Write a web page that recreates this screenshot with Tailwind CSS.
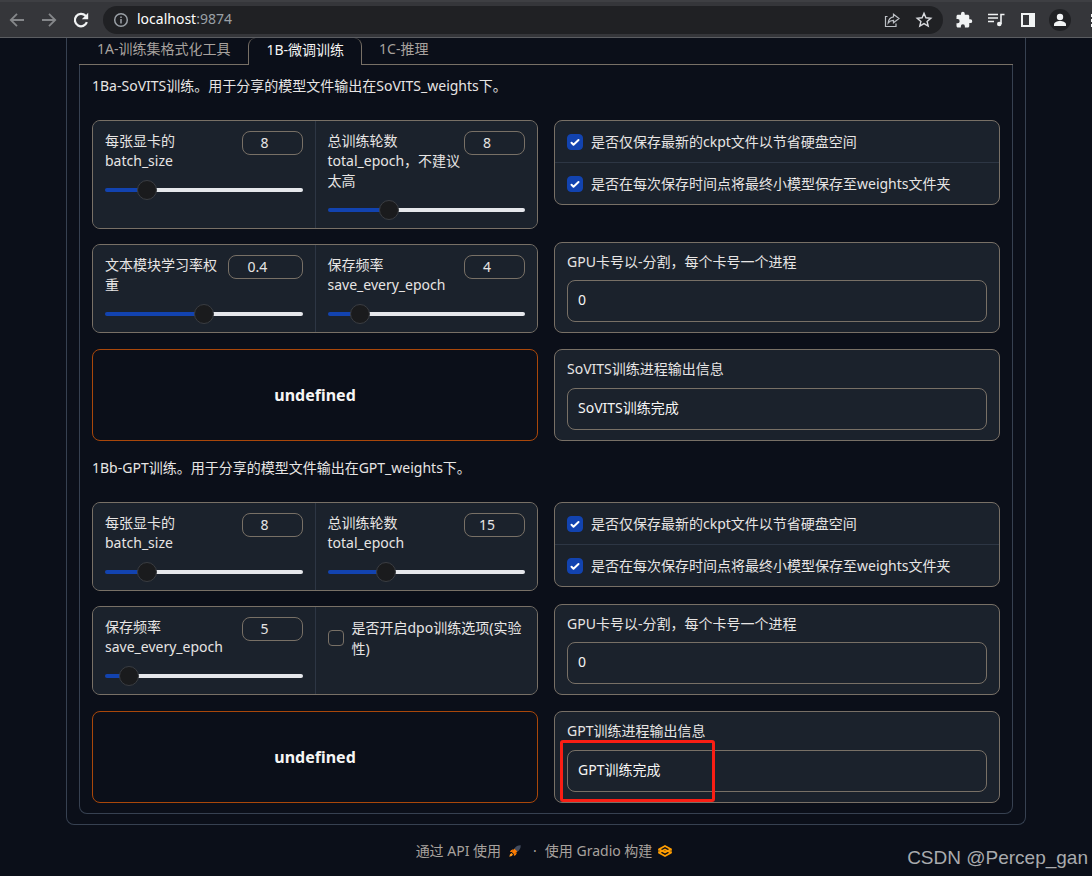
<!DOCTYPE html>
<html lang="zh-CN">
<head>
<meta charset="utf-8">
<meta name="viewport" content="width=device-width, initial-scale=1">
<title>GPT-SoVITS WebUI</title>
<script src="https://cdn.jsdelivr.net/npm/@tailwindcss/browser@4"></script>
</head>
<body class="relative min-h-screen overflow-x-hidden bg-[#0b0f19] text-sm text-[#e7e5e4] font-['Noto_Sans','Noto_Sans_CJK_SC',sans-serif] [color-scheme:dark]">

<header class="flex h-[38px] items-center overflow-hidden border-t-2 border-b border-t-[#3e3f43] border-b-[#5b5d61] bg-[#35363a] pl-2 text-[#e8eaed]">
  <div class="flex shrink-0 items-center gap-3.5">
    <button type="button" aria-label="后退" class="text-[#85878a]"><svg class="size-[18px]" viewBox="0 0 18 18" fill="none" stroke="currentColor" stroke-width="1.8"><path d="M16 9H3M9 2.8 2.8 9 9 15.2"/></svg></button>
    <button type="button" aria-label="前进" class="text-[#85878a]"><svg class="size-[18px]" viewBox="0 0 18 18" fill="none" stroke="currentColor" stroke-width="1.8"><path d="M2 9h13M9 2.8 15.2 9 9 15.2"/></svg></button>
    <button type="button" aria-label="重新加载" class="text-[#f1f3f4]"><svg class="size-[18px]" viewBox="0 0 18 18" fill="none" stroke="currentColor" stroke-width="2.2"><path d="M14.9 11.2A6.2 6.2 0 1 1 13.6 4.8L15 6.2"/><path d="M16.2 1.8v6.4H9.8z" fill="currentColor" stroke="none"/></svg></button>
  </div>
  <div class="ml-[13px] flex h-7 min-w-0 flex-1 items-center rounded-full bg-[#202124] pr-2.5 pl-2.5">
    <svg class="size-4 shrink-0 text-[#9aa0a6]" viewBox="0 0 16 16" fill="none" stroke="currentColor" stroke-width="1.5"><circle cx="8" cy="8" r="6.3"/><path d="M8 7v4.4M8 4.4V6"/></svg>
    <span class="ml-2 flex-1 pb-0.5 text-white">localhost<span class="text-[#9aa0a6]">:9874</span></span>
    <button type="button" aria-label="分享" class="text-[#bdc1c6]"><svg class="size-[18px]" viewBox="0 0 18 18" fill="none" stroke="currentColor" stroke-width="1.2"><path d="M4.5 5.5h-2v10h10.5v-3"/><path d="M10.5 3.2 16 7.5l-5.5 4.3V9.3c-2.5 0-4 .7-5.3 2.5.3-3.2 2-5.5 5.3-6z"/></svg></button>
    <button type="button" aria-label="收藏" class="ml-3.5 text-[#dadce0]"><svg class="size-[18px]" viewBox="0 0 18 18" fill="none" stroke="currentColor" stroke-width="1.4"><path d="m9 2.3 1.9 4.5 4.9.4-3.7 3.2 1.1 4.7L9 12.6l-4.2 2.5 1.1-4.7-3.7-3.2 4.9-.4z"/></svg></button>
  </div>
  <div class="ml-3 flex shrink-0 items-center text-[#f1f3f4]">
    <button type="button" aria-label="扩展程序"><svg class="size-[18px]" viewBox="0 0 24 24" fill="currentColor"><path d="M20.5 11H19V7c0-1.1-.9-2-2-2h-4V3.5a2.5 2.5 0 0 0-5 0V5H4c-1.1 0-2 .9-2 2v3.8h1.5a2.7 2.7 0 0 1 0 5.4H2V20c0 1.1.9 2 2 2h3.8v-1.5a2.7 2.7 0 0 1 5.4 0V22H17c1.1 0 2-.9 2-2v-4h1.5a2.5 2.5 0 0 0 0-5z"/></svg></button>
    <button type="button" aria-label="媒体控制" class="ml-3.5"><svg class="size-[18px]" viewBox="0 0 18 18" fill="none" stroke="currentColor" stroke-width="1.6"><path d="M1 3.5h10M1 7h10M1 10.5h6M17.5 3.5H14V13"/><circle cx="12.3" cy="13" r="2.3" fill="currentColor" stroke="none"/></svg></button>
    <button type="button" aria-label="侧边栏" class="ml-3.5"><svg class="size-[18px]" viewBox="0 0 18 18"><path fill="currentColor" fill-rule="evenodd" d="M2 2h14v14H2zM4 4v10h6V4z"/></svg></button>
    <button type="button" aria-label="个人资料" class="ml-3 rounded-full bg-[#202124]"><svg class="size-[22px]" viewBox="0 0 22 22" fill="currentColor"><circle cx="11" cy="8" r="3.2"/><path d="M5 17v-1.5c0-2.2 3-3.5 6-3.5s6 1.3 6 3.5V17z"/></svg></button>
    <button type="button" aria-label="菜单" class="ml-5 w-px overflow-hidden"><svg class="h-4 w-1" viewBox="0 0 4 16" fill="currentColor"><path d="M0 2h3v3H0zM0 7h3v3H0zM0 12h3v3H0z"/></svg></button>
  </div>
</header>

<main class="px-[66px]">
  <div class="rounded-b-lg border border-t-0 border-[#374151] px-3 pb-[10px]">
    <div role="tablist" class="flex h-[27px] text-[#a8a29e]">
      <button type="button" role="tab" aria-selected="false" class="border-b border-[#787066] pr-[18px] pb-1 pl-[18px]">1A-训练集格式化工具</button>
      <button type="button" role="tab" aria-selected="true" class="rounded-t-lg border-x border-[#787066] px-[17px] pb-1 text-[#f5f5f4]">1B-微调训练</button>
      <button type="button" role="tab" aria-selected="false" class="border-b border-[#787066] px-[17px] pb-1">1C-推理</button>
      <span class="flex-1 border-b border-[#787066]"></span>
    </div>

    <div role="tabpanel" class="flex flex-col gap-4 rounded-b-lg border border-t-0 border-[#374151] px-3 pt-[10px] pb-[10px]">
      <p class="h-[29px] leading-[21px]">1Ba-SoVITS训练。用于分享的模型文件输出在SoVITS_weights下。</p>

      <section class="grid grid-cols-2 gap-4">
        <div class="flex flex-col gap-[15px]">
          <div class="grid grid-cols-2 gap-px overflow-hidden rounded-lg border border-[#787066] bg-[#2d3644]">
            <div class="bg-[#1b222c] px-3 pt-[10px] pb-2">
              <div class="flex items-start justify-between">
                <label for="s-batch" class="min-w-0 leading-5">每张显卡的 batch_size</label>
                <input id="s-batch" type="number" value="8" class="h-6 w-[61px] shrink-0 rounded-lg border border-[#787066] bg-transparent px-2 pb-0.5 text-center">
              </div>
              <input type="range" aria-label="batch_size" min="1" max="40" value="8" style="--fill:20%" class="mt-[9px] block h-5 w-full appearance-none bg-transparent [&::-webkit-slider-runnable-track]:h-1 [&::-webkit-slider-runnable-track]:rounded-full [&::-webkit-slider-runnable-track]:bg-[linear-gradient(to_right,#1243b0_var(--fill),#e5e7eb_var(--fill))] [&::-webkit-slider-thumb]:-mt-2 [&::-webkit-slider-thumb]:size-5 [&::-webkit-slider-thumb]:appearance-none [&::-webkit-slider-thumb]:rounded-full [&::-webkit-slider-thumb]:border [&::-webkit-slider-thumb]:border-[#3a3d42] [&::-webkit-slider-thumb]:bg-[#1a1b1d]">
            </div>
            <div class="bg-[#1b222c] px-3 pt-[10px] pb-2">
              <div class="flex items-start justify-between">
                <label for="s-epoch" class="min-w-0 leading-5">总训练轮数total_epoch，不建议太高</label>
                <input id="s-epoch" type="number" value="8" class="h-6 w-[61px] shrink-0 rounded-lg border border-[#787066] bg-transparent px-2 pb-0.5 text-center">
              </div>
              <input type="range" aria-label="total_epoch" min="1" max="25" value="8" style="--fill:30%" class="mt-[9px] block h-5 w-full appearance-none bg-transparent [&::-webkit-slider-runnable-track]:h-1 [&::-webkit-slider-runnable-track]:rounded-full [&::-webkit-slider-runnable-track]:bg-[linear-gradient(to_right,#1243b0_var(--fill),#e5e7eb_var(--fill))] [&::-webkit-slider-thumb]:-mt-2 [&::-webkit-slider-thumb]:size-5 [&::-webkit-slider-thumb]:appearance-none [&::-webkit-slider-thumb]:rounded-full [&::-webkit-slider-thumb]:border [&::-webkit-slider-thumb]:border-[#3a3d42] [&::-webkit-slider-thumb]:bg-[#1a1b1d]">
            </div>
          </div>
          <div class="grid grid-cols-2 gap-px overflow-hidden rounded-lg border border-[#787066] bg-[#2d3644]">
            <div class="bg-[#1b222c] px-3 pt-[10px] pb-2">
              <div class="flex items-start justify-between">
                <label for="s-lr" class="min-w-0 leading-5">文本模块学习率权重</label>
                <input id="s-lr" type="number" value="0.4" step="0.05" class="h-6 w-[75px] shrink-0 rounded-lg border border-[#787066] bg-transparent px-2 pb-0.5 text-center">
              </div>
              <input type="range" aria-label="文本模块学习率权重" min="0.2" max="0.6" step="0.05" value="0.4" style="--fill:50%" class="mt-[9px] block h-5 w-full appearance-none bg-transparent [&::-webkit-slider-runnable-track]:h-1 [&::-webkit-slider-runnable-track]:rounded-full [&::-webkit-slider-runnable-track]:bg-[linear-gradient(to_right,#1243b0_var(--fill),#e5e7eb_var(--fill))] [&::-webkit-slider-thumb]:-mt-2 [&::-webkit-slider-thumb]:size-5 [&::-webkit-slider-thumb]:appearance-none [&::-webkit-slider-thumb]:rounded-full [&::-webkit-slider-thumb]:border [&::-webkit-slider-thumb]:border-[#3a3d42] [&::-webkit-slider-thumb]:bg-[#1a1b1d]">
            </div>
            <div class="bg-[#1b222c] px-3 pt-[10px] pb-2">
              <div class="flex items-start justify-between">
                <label for="s-save" class="min-w-0 leading-5">保存频率 save_every_epoch</label>
                <input id="s-save" type="number" value="4" class="h-6 w-[61px] shrink-0 rounded-lg border border-[#787066] bg-transparent px-2 pb-0.5 text-center">
              </div>
              <input type="range" aria-label="save_every_epoch" min="1" max="25" value="4" style="--fill:14%" class="mt-[9px] block h-5 w-full appearance-none bg-transparent [&::-webkit-slider-runnable-track]:h-1 [&::-webkit-slider-runnable-track]:rounded-full [&::-webkit-slider-runnable-track]:bg-[linear-gradient(to_right,#1243b0_var(--fill),#e5e7eb_var(--fill))] [&::-webkit-slider-thumb]:-mt-2 [&::-webkit-slider-thumb]:size-5 [&::-webkit-slider-thumb]:appearance-none [&::-webkit-slider-thumb]:rounded-full [&::-webkit-slider-thumb]:border [&::-webkit-slider-thumb]:border-[#3a3d42] [&::-webkit-slider-thumb]:bg-[#1a1b1d]">
            </div>
          </div>
        </div>
        <div class="flex flex-col justify-between">
          <div class="divide-y divide-[#2d3644] rounded-lg border border-[#787066] bg-[#1b222c] leading-[21px]">
            <label class="flex items-center gap-2 px-3 py-[10px]">
              <span class="grid size-4 shrink-0"><input type="checkbox" checked class="col-start-1 row-start-1 size-4 appearance-none rounded-sm border border-[#787066] checked:border-[#1243b0] checked:bg-[#1243b0]"><svg class="pointer-events-none col-start-1 row-start-1 size-4" viewBox="0 0 16 16" fill="none" stroke="#fff" stroke-width="2" stroke-linecap="round" stroke-linejoin="round"><path d="m4.5 8.7 2 2 5-4.7"/></svg></span>
              是否仅保存最新的ckpt文件以节省硬盘空间
            </label>
            <label class="flex items-center gap-2 px-3 py-[10px]">
              <span class="grid size-4 shrink-0"><input type="checkbox" checked class="col-start-1 row-start-1 size-4 appearance-none rounded-sm border border-[#787066] checked:border-[#1243b0] checked:bg-[#1243b0]"><svg class="pointer-events-none col-start-1 row-start-1 size-4" viewBox="0 0 16 16" fill="none" stroke="#fff" stroke-width="2" stroke-linecap="round" stroke-linejoin="round"><path d="m4.5 8.7 2 2 5-4.7"/></svg></span>
              是否在每次保存时间点将最终小模型保存至weights文件夹
            </label>
          </div>
          <div class="rounded-lg border border-[#787066] bg-[#1b222c] px-3 pt-[9px] pb-[10px]">
            <label for="s-gpu" class="block leading-5">GPU卡号以-分割，每个卡号一个进程</label>
            <input id="s-gpu" type="text" value="0" class="mt-2 block h-[42px] w-full rounded-lg border border-[#787066] bg-transparent px-[10px] pb-1 text-[#f5f5f4]">
          </div>
        </div>
      </section>

      <section class="grid grid-cols-2 gap-4">
        <button type="button" class="h-[92px] rounded-lg border border-[#a9470a] text-base font-bold text-[#f5f5f4]">undefined</button>
        <div class="flex flex-col justify-between rounded-lg border border-[#787066] bg-[#1b222c] px-3 pt-[9px] pb-[10px]">
          <label for="s-out" class="block leading-5">SoVITS训练进程输出信息</label>
          <input id="s-out" type="text" readonly value="SoVITS训练完成" class="block h-[42px] w-full rounded-lg border border-[#787066] bg-transparent px-[10px] pb-1 text-[#f5f5f4]">
        </div>
      </section>

      <p class="h-[29px] leading-[21px]">1Bb-GPT训练。用于分享的模型文件输出在GPT_weights下。</p>

      <section class="grid grid-cols-2 gap-4">
        <div class="flex flex-col gap-[15px]">
          <div class="grid grid-cols-2 gap-px overflow-hidden rounded-lg border border-[#787066] bg-[#2d3644]">
            <div class="bg-[#1b222c] px-3 pt-[10px] pb-2">
              <div class="flex items-start justify-between">
                <label for="g-batch" class="min-w-0 leading-5">每张显卡的 batch_size</label>
                <input id="g-batch" type="number" value="8" class="h-6 w-[61px] shrink-0 rounded-lg border border-[#787066] bg-transparent px-2 pb-0.5 text-center">
              </div>
              <input type="range" aria-label="batch_size" min="1" max="40" value="8" style="--fill:20%" class="mt-[9px] block h-5 w-full appearance-none bg-transparent [&::-webkit-slider-runnable-track]:h-1 [&::-webkit-slider-runnable-track]:rounded-full [&::-webkit-slider-runnable-track]:bg-[linear-gradient(to_right,#1243b0_var(--fill),#e5e7eb_var(--fill))] [&::-webkit-slider-thumb]:-mt-2 [&::-webkit-slider-thumb]:size-5 [&::-webkit-slider-thumb]:appearance-none [&::-webkit-slider-thumb]:rounded-full [&::-webkit-slider-thumb]:border [&::-webkit-slider-thumb]:border-[#3a3d42] [&::-webkit-slider-thumb]:bg-[#1a1b1d]">
            </div>
            <div class="bg-[#1b222c] px-3 pt-[10px] pb-2">
              <div class="flex items-start justify-between">
                <label for="g-epoch" class="min-w-0 leading-5">总训练轮数 total_epoch</label>
                <input id="g-epoch" type="number" value="15" class="h-6 w-[61px] shrink-0 rounded-lg border border-[#787066] bg-transparent px-2 pb-0.5 text-center">
              </div>
              <input type="range" aria-label="total_epoch" min="2" max="50" value="15" style="--fill:29%" class="mt-[9px] block h-5 w-full appearance-none bg-transparent [&::-webkit-slider-runnable-track]:h-1 [&::-webkit-slider-runnable-track]:rounded-full [&::-webkit-slider-runnable-track]:bg-[linear-gradient(to_right,#1243b0_var(--fill),#e5e7eb_var(--fill))] [&::-webkit-slider-thumb]:-mt-2 [&::-webkit-slider-thumb]:size-5 [&::-webkit-slider-thumb]:appearance-none [&::-webkit-slider-thumb]:rounded-full [&::-webkit-slider-thumb]:border [&::-webkit-slider-thumb]:border-[#3a3d42] [&::-webkit-slider-thumb]:bg-[#1a1b1d]">
            </div>
          </div>
          <div class="grid grid-cols-2 gap-px overflow-hidden rounded-lg border border-[#787066] bg-[#2d3644]">
            <div class="bg-[#1b222c] px-3 pt-[10px] pb-2">
              <div class="flex items-start justify-between">
                <label for="g-save" class="min-w-0 leading-5">保存频率 save_every_epoch</label>
                <input id="g-save" type="number" value="5" class="h-6 w-[61px] shrink-0 rounded-lg border border-[#787066] bg-transparent px-2 pb-0.5 text-center">
              </div>
              <input type="range" aria-label="save_every_epoch" min="1" max="50" value="5" style="--fill:10%" class="mt-[9px] block h-5 w-full appearance-none bg-transparent [&::-webkit-slider-runnable-track]:h-1 [&::-webkit-slider-runnable-track]:rounded-full [&::-webkit-slider-runnable-track]:bg-[linear-gradient(to_right,#1243b0_var(--fill),#e5e7eb_var(--fill))] [&::-webkit-slider-thumb]:-mt-2 [&::-webkit-slider-thumb]:size-5 [&::-webkit-slider-thumb]:appearance-none [&::-webkit-slider-thumb]:rounded-full [&::-webkit-slider-thumb]:border [&::-webkit-slider-thumb]:border-[#3a3d42] [&::-webkit-slider-thumb]:bg-[#1a1b1d]">
            </div>
            <div class="bg-[#1b222c] px-3 py-[10px]">
              <label class="flex items-center gap-2 leading-[21px]">
                <input type="checkbox" class="size-4 shrink-0 appearance-none rounded-sm border border-[#787066] checked:bg-[#1243b0]">
                <span>是否开启dpo训练选项(实验性)</span>
              </label>
            </div>
          </div>
        </div>
        <div class="flex flex-col justify-between">
          <div class="divide-y divide-[#2d3644] rounded-lg border border-[#787066] bg-[#1b222c] leading-[21px]">
            <label class="flex items-center gap-2 px-3 py-[10px]">
              <span class="grid size-4 shrink-0"><input type="checkbox" checked class="col-start-1 row-start-1 size-4 appearance-none rounded-sm border border-[#787066] checked:border-[#1243b0] checked:bg-[#1243b0]"><svg class="pointer-events-none col-start-1 row-start-1 size-4" viewBox="0 0 16 16" fill="none" stroke="#fff" stroke-width="2" stroke-linecap="round" stroke-linejoin="round"><path d="m4.5 8.7 2 2 5-4.7"/></svg></span>
              是否仅保存最新的ckpt文件以节省硬盘空间
            </label>
            <label class="flex items-center gap-2 px-3 py-[10px]">
              <span class="grid size-4 shrink-0"><input type="checkbox" checked class="col-start-1 row-start-1 size-4 appearance-none rounded-sm border border-[#787066] checked:border-[#1243b0] checked:bg-[#1243b0]"><svg class="pointer-events-none col-start-1 row-start-1 size-4" viewBox="0 0 16 16" fill="none" stroke="#fff" stroke-width="2" stroke-linecap="round" stroke-linejoin="round"><path d="m4.5 8.7 2 2 5-4.7"/></svg></span>
              是否在每次保存时间点将最终小模型保存至weights文件夹
            </label>
          </div>
          <div class="rounded-lg border border-[#787066] bg-[#1b222c] px-3 pt-[9px] pb-[10px]">
            <label for="g-gpu" class="block leading-5">GPU卡号以-分割，每个卡号一个进程</label>
            <input id="g-gpu" type="text" value="0" class="mt-2 block h-[42px] w-full rounded-lg border border-[#787066] bg-transparent px-[10px] pb-1 text-[#f5f5f4]">
          </div>
        </div>
      </section>

      <section class="grid grid-cols-2 gap-4">
        <button type="button" class="h-[92px] rounded-lg border border-[#a9470a] text-base font-bold text-[#f5f5f4]">undefined</button>
        <div class="relative flex flex-col justify-between rounded-lg border border-[#787066] bg-[#1b222c] px-3 pt-[9px] pb-[10px]">
          <label for="g-out" class="block leading-5">GPT训练进程输出信息</label>
          <input id="g-out" type="text" readonly value="GPT训练完成" class="block h-[42px] w-full rounded-lg border border-[#787066] bg-transparent px-[10px] pb-1 text-[#f5f5f4]">
          <div class="pointer-events-none absolute top-7 left-[5px] h-[62px] w-[155px] rounded-[3px] border-[3px] border-[#fa1e14]"></div>
        </div>
      </section>
    </div>
  </div>
</main>

<footer class="mt-4 flex items-center justify-center pr-1 leading-5 text-[#a8a29e]">
  <a href="#" class="flex items-center">通过 API 使用
    <svg class="ml-2 size-3" viewBox="0 0 12 12"><path d="M11.7.3C9 .2 7 1.2 5.5 3.3L4.5 5 7 7.5l1.7-1C10.8 5 11.8 3 11.7.3z" fill="#434b5d"/><path d="M4.6 3.9 2 5.2.9 7l2.3.1zM8.1 7.4 6.8 10l-1.9 1.1L4.9 8.8z" fill="#ff7c00"/><path d="M5.4 3.7 2.8 7l2.2 2.2 3.3-2.6z" fill="#ff7c00"/><path d="M2.6 8 1 9.2.3 11.7l2.5-.7L4 9.4z" fill="#ff9a1f"/></svg>
  </a>
  <span class="mr-2 ml-3">·</span>
  <a href="#" class="flex items-center">使用 Gradio 构建
    <svg class="ml-1.5 size-[14px]" viewBox="0 0 14 14" fill="none" stroke="#ff9d00" stroke-width="1.8" stroke-linejoin="round"><path d="M7 2 13 5.2 7 8.4 1 5.2z"/><path d="M4.5 6.8 7 5.5l6 3.2-6 3.3-6-3.3z"/><path d="M1 5.2v3.6M13 5.2v3.6" stroke-width="1.2"/></svg>
  </a>
</footer>

<div class="pointer-events-none absolute right-1 bottom-[6px] text-[19px] leading-6 text-[#a9abae] font-['Liberation_Sans',sans-serif]">CSDN @Percep_gan</div>
</body>
</html>
